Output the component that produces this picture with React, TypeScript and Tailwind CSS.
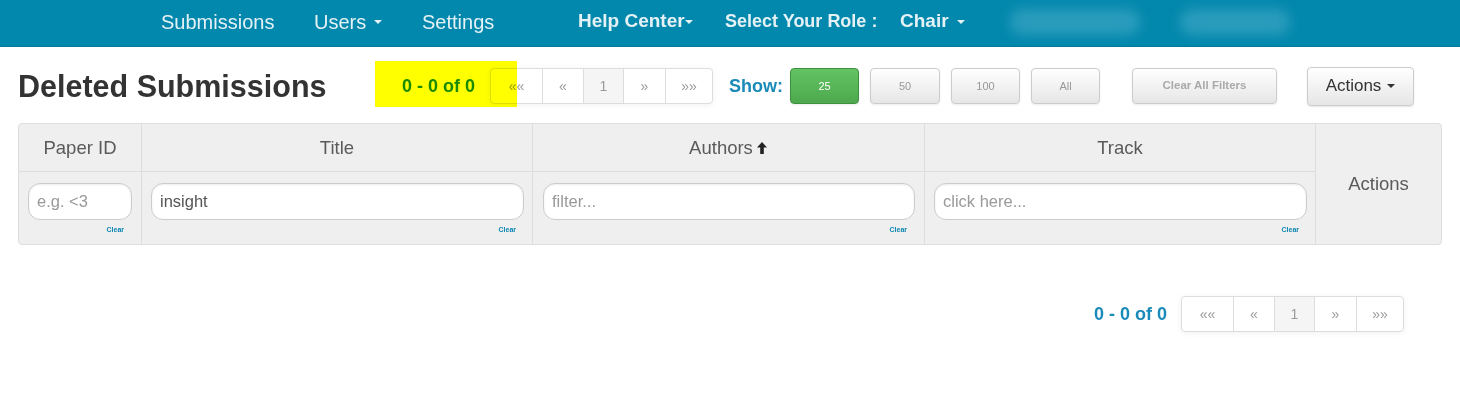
import React from 'react';

const font = { fontFamily: '"Liberation Sans", Arial, sans-serif' };

function Caret({ className = '' }: { className?: string }) {
  return (
    <span
      className={`inline-block w-0 h-0 border-l-[4px] border-r-[4px] border-t-[4px] border-l-transparent border-r-transparent align-middle ${className}`}
    />
  );
}

function Pager() {
  const cells = [
    { label: '««', w: 'w-[51px]' },
    { label: '«', w: 'w-[41px]' },
    { label: '1', w: 'w-[40px]', active: true },
    { label: '»', w: 'w-[42px]' },
    { label: '»»', w: 'w-[47px]' },
  ];
  return (
    <div className="flex h-[36px] rounded-[4px] border border-[#ddd] bg-white shadow-[0_1px_6px_rgba(0,0,0,0.06)] overflow-hidden">
      {cells.map((c, i) => (
        <div
          key={i}
          className={`${c.w} flex items-center justify-center text-[14px] text-[#9a9a9a] ${i > 0 ? 'border-l border-[#ddd]' : ''} ${c.active ? 'bg-[#f5f5f5]' : ''}`}
        >
          {c.label}
        </div>
      ))}
    </div>
  );
}

function SizeButton({ label, active, w }: { label: string; active?: boolean; w: string }) {
  return (
    <div
      className={`${w} h-[36px] flex items-center justify-center rounded-[4px] border text-[11px] shadow-[0_1px_2px_rgba(0,0,0,0.08)] ${
        active
          ? 'bg-gradient-to-b from-[#62c462] to-[#4ea84e] border-[#3e8f3e] text-white'
          : 'bg-gradient-to-b from-white to-[#e6e6e6] border-[#ccc] text-[#999]'
      }`}
    >
      {label}
    </div>
  );
}

function FilterCell({
  placeholder,
  value,
  pl,
  pr,
  first,
}: {
  placeholder: string;
  value?: string;
  pl: string;
  pr: string;
  first?: boolean;
}) {
  return (
    <div className={`${pl} ${pr} pt-[11px] ${first ? '' : 'border-l border-[#ddd]'}`}>
      <div className="h-[37px] rounded-[12px] border border-[#ccc] bg-white shadow-[inset_0_1px_2px_rgba(0,0,0,0.08)] flex items-center px-[8px] text-[16.5px]">
        {value ? <span className="text-[#555]">{value}</span> : <span className="text-[#999]">{placeholder}</span>}
      </div>
      <div className="text-right pr-[8px] mt-[6px] text-[7px] font-bold text-[#0a86b0] leading-none">Clear</div>
    </div>
  );
}

export default function App() {
  return (
    <div className="w-[1460px] h-[394px] bg-white relative overflow-hidden" style={font}>
      <nav className="h-[47px] pb-[3px] bg-[#0388ad] border-b border-[#07779a] flex items-center text-[#e4f1f5] whitespace-nowrap">
        <span className="ml-[161px] w-[153px] text-[20px]">Submissions</span>
        <span className="w-[108px] text-[20px] flex items-center gap-[8px]">
          Users <Caret className="border-t-[#e4f1f5]" />
        </span>
        <span className="w-[156px] text-[20px]">Settings</span>
        <span className="w-[147px] text-[19px] font-bold flex items-center">
          Help Center<Caret className="border-t-[#e4f1f5]" />
        </span>
        <span className="w-[175px] text-[18px] font-bold">Select Your Role :</span>
        <span className="w-[110px] text-[19px] font-bold flex items-center gap-[8px]">
          Chair <Caret className="border-t-[#e4f1f5]" />
        </span>
        <span className="w-[130px] h-[26px] rounded-full bg-[#2a9cbc] blur-[6px]" />
        <span className="ml-[40px] w-[110px] h-[26px] rounded-full bg-[#2a9cbc] blur-[6px]" />
      </nav>

      <div className="flex items-center h-[60px] mt-[7px] pt-[4px] whitespace-nowrap">
        <h1 className="ml-[18px] w-[309px] text-[30.5px] font-bold text-[#333] leading-none">Deleted Submissions</h1>
        <span className="ml-[75px] w-[74px] text-[18px] font-bold text-[#1a8ab8]">0 - 0 of 0</span>
        <div className="ml-[14px]">
          <Pager />
        </div>
        <span className="ml-[16px] w-[53px] text-[18px] font-bold text-[#1a8ab8]">Show:</span>
        <div className="ml-[8px] flex gap-[11px]">
          <SizeButton label="25" active w="w-[69px]" />
          <SizeButton label="50" w="w-[70px]" />
          <SizeButton label="100" w="w-[69px]" />
          <SizeButton label="All" w="w-[69px]" />
        </div>
        <div className="ml-[32px]">
          <div className="w-[145px] h-[36px] flex items-center justify-center rounded-[4px] border border-[#ccc] bg-gradient-to-b from-white to-[#e6e6e6] text-[11.5px] font-bold text-[#aaa] shadow-[0_1px_2px_rgba(0,0,0,0.08)]">
            Clear All Filters
          </div>
        </div>
        <div className="ml-[30px] w-[107px] h-[39px] flex items-center justify-center gap-[6px] rounded-[4px] border border-[#ccc] bg-gradient-to-b from-white to-[#e6e6e6] text-[17px] text-[#333] shadow-[0_1px_2px_rgba(0,0,0,0.1)]">
          Actions <Caret className="border-t-[#333]" />
        </div>
      </div>

      <div className="absolute left-[375px] top-[61px] w-[142px] h-[46px] bg-[#ffff00] mix-blend-multiply" />

      <div className="mx-[18px] mt-[9px] w-[1424px] rounded-[4px] border border-[#ddd] bg-[#efefef] grid grid-cols-[122px_391px_392px_391px_1fr] grid-rows-[48px_72px] text-[18.5px] text-[#5a5a5a]">
        <div className="flex items-center justify-center border-b border-[#ddd]">Paper ID</div>
        <div className="flex items-center justify-center border-b border-l border-[#ddd]">Title</div>
        <div className="flex items-center justify-center border-b border-l border-[#ddd]">
          Authors
          <svg width="12" height="14" viewBox="0 0 12 14" className="ml-[3px]">
            <path d="M6 1 L11 6.5 H7.8 V13 H4.2 V6.5 H1 Z" fill="#222" />
          </svg>
        </div>
        <div className="flex items-center justify-center border-b border-l border-[#ddd]">Track</div>
        <div className="row-span-2 flex items-center justify-center border-l border-[#ddd]">Actions</div>
        <FilterCell first placeholder="e.g. <3" pl="pl-[9px]" pr="pr-[9px]" />
        <FilterCell placeholder="" value="insight" pl="pl-[9px]" pr="pr-[8px]" />
        <FilterCell placeholder="filter..." pl="pl-[10px]" pr="pr-[9px]" />
        <FilterCell placeholder="click here..." pl="pl-[9px]" pr="pr-[8px]" />
      </div>

      <div className="flex justify-end items-center mt-[51px] pr-[56px]">
        <span className="text-[18px] font-bold text-[#1a8ab8] mr-[14px]">0 - 0 of 0</span>
        <Pager />
      </div>
    </div>
  );
}
